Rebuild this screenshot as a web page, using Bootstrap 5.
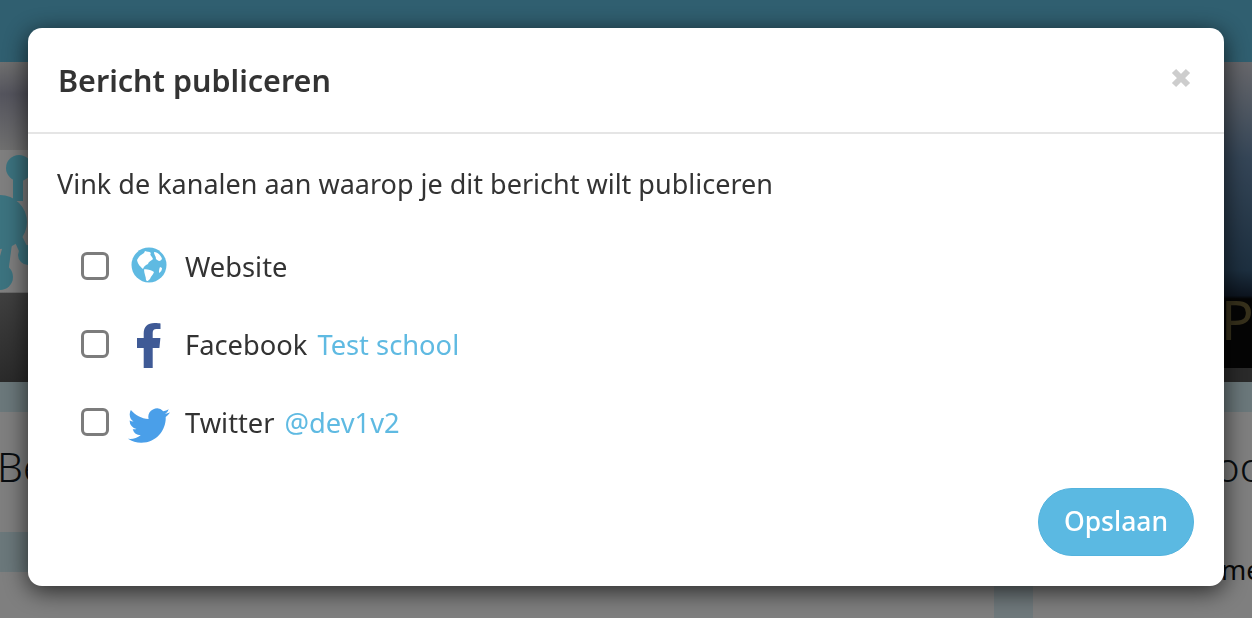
<!DOCTYPE html>
<html lang="nl">
<head>
<meta charset="utf-8">
<title>Bericht publiceren</title>
<link href="https://cdn.jsdelivr.net/npm/bootstrap@5.3.0/dist/css/bootstrap.min.css" rel="stylesheet">
<style>
html,body{height:100%;overflow:hidden}
body{font-family:"Noto Sans","Open Sans",sans-serif;background:#fff;color:#2f2f2f}
.topbar{height:62px;background:#60bee0}
.hero{height:320px}
.hero-left{width:28px;background:linear-gradient(#e0e0e0 0,#aaaabc 10%,#e0e0e0 27.5%,#fff 27.6%,#fff 72%,#808080 72.100%,#555 100%)}
.hero-right{width:28px;overflow:hidden;background:linear-gradient(#d0d0d8,#6a8caf 30%,#3a5f80 65%,#1a2a40 73%,#0a0a0a 74%,#0a0a0a 95.600%,#555 95.700%)}
.hero-logo{width:28px;height:140px;display:block;margin-top:90px}
.hero-letter{display:block;margin-top:222px;margin-left:-3px;font-size:54px;line-height:70px;font-weight:400;color:#6e6238;white-space:nowrap}
.band{height:30px;background:#d6f0f6}
.headline{height:120px;padding-top:28px;font-size:41px;font-weight:300;color:#121a22;line-height:52px;margin:0 -12px 0 -3px}
.lower{height:86px;position:relative}
.band-two{height:40px;background:#d6f0f6;width:80%}
.lower-row{height:46px}
.side-col{width:39px;margin-left:994px;background:#dff2f8;height:32px;margin-top:14px}
.side-word{position:absolute;left:1221px;top:20px;font-size:27px;line-height:36px;color:#111;white-space:nowrap}
.modal-plain{position:fixed;inset:0;z-index:1055}
.sheet{position:absolute;left:28px;top:28px;width:1196px;height:558px;background:#fff;border-radius:14px;box-shadow:0 5px 24px rgba(0,0,0,.7);display:flex;flex-direction:column;border:0}
.sheet-head{height:106px;border-bottom:2px solid #e5e5e5;padding:30px 30px 0;position:relative}
.sheet-title{font-size:30.500px;font-weight:600;line-height:44px;margin:0;color:#333}
.x-close{position:absolute;right:33px;top:38px;width:20px;height:20px;padding:0;margin-top:-2px;border:0;background:none;display:block}
.sheet-body{padding:30px 29px 0;flex:1}
.intro{font-size:27px;line-height:40px;margin:0 0 40px;color:#333;white-space:nowrap}
.channel{height:78px;padding-left:24px;font-size:27.300px;color:#333;align-items:flex-start}
.channel .form-check-input{width:28px;height:28px;margin:0;border:3px solid #7c7c7c;border-radius:6px;flex:none;margin-top:8px}
.ico{width:46px;margin-left:17px;margin-right:13px;flex:none;display:flex;justify-content:center}
.ico-globe{margin-top:3px}
.ico-f{margin-top:1px}
.ico-bird{margin-top:8px}
.ch-name{line-height:44px;margin-top:1px}
.ch-acc{color:#5fbae2;margin-left:10px;line-height:44px;margin-top:1px}
.sheet-foot{padding:0 30px 30px;display:flex;justify-content:flex-end}
.save-btn{width:156px;height:68px;border-radius:34px;background:#5bb9e2;border:1px solid #53b3de;color:#fff;font-size:26.500px;font-weight:500;padding:0}
</style>
</head>
<body>
<div class="topbar"></div>
<div class="d-flex justify-content-between hero">
  <div class="hero-left">
    <svg class="hero-logo" viewBox="0 0 28 140" aria-hidden="true"><g fill="#78e6ff"><circle cx="19" cy="16" r="13"/><rect x="13" y="25" width="10" height="24"/><circle cx="0" cy="70" r="27"/><path d="M4 90 12 92 8 122 -4 118z"/><circle cx="0" cy="125" r="13"/><path d="M14 88 22 84 30 100 22 106z"/><circle cx="28" cy="103" r="10"/></g></svg>
  </div>
  <div class="hero-right"><span class="hero-letter">P</span></div>
</div>
<div class="band"></div>
<div class="headline d-flex justify-content-between"><span>Be</span><span>oo</span></div>
<div class="lower">
  <div class="band-two"></div>
  <div class="lower-row"><div class="side-col"></div></div>
  <span class="side-word">me</span>
</div>
<div class="modal-backdrop show"></div>
<div class="modal-plain" role="dialog">
  <div class="sheet">
    <div class="sheet-head">
      <h4 class="sheet-title">Bericht publiceren</h4>
      <button class="x-close" aria-label="Sluiten"><svg viewBox="0 0 20 20" width="20" height="20"><path d="M3 3 17 17M17 3 3 17" stroke="#cdcdcd" stroke-width="6"/></svg></button>
    </div>
    <div class="sheet-body">
      <p class="intro">Vink de kanalen aan waarop je dit bericht wilt publiceren</p>
      <div class="d-flex channel">
        <input class="form-check-input" type="checkbox" aria-label="Website">
        <span class="ico ico-globe"><svg width="36" height="36" viewBox="0 0 36 36"><circle cx="18" cy="18" r="17.500" fill="#5fbae2"/><path fill="#fff" d="M6 13C8 9 10 8 13 6L14 4C16 5 18 4 20 6 18 8 21 9 22 12 20 14 18 14 17 17 15 18 13 19 12 22 10 20 7 18 6 13zM13 22.500C16 22 20 23 23 25 22 28 20 29 19 32 17 34 16 35 15 33 15 30 13 26 13 22.500zM23 5C26 5 30 8 31 12 29 15 27 14 25 12 25 9 23 8 23 5zM29 20 31 21C31 23 30 25 28 26 28 24 28 22 29 20z"/></svg></span>
        <span class="ch-name">Website</span>
      </div>
      <div class="d-flex channel">
        <input class="form-check-input" type="checkbox" aria-label="Facebook">
        <span class="ico ico-f"><svg width="24" height="45" viewBox="0 0 24 45"><path fill="#3f5a96" d="M15.700 45V25h6.700l1-10h-7.700V10c0-2.800 1-4 3.800-4H23.500V.5C22.500.3 20.300 0 17.500 0 10.500 0 6.700 4 6.700 10.500V15H0v10h6.700v20z"/></svg></span>
        <span class="ch-name">Facebook</span><span class="ch-acc">Test school</span>
      </div>
      <div class="d-flex channel">
        <input class="form-check-input" type="checkbox" aria-label="Twitter">
        <span class="ico ico-bird"><svg width="42" height="36" viewBox="0 0 24 20.500"><path fill="#4a9fe9" d="M23.953 2.570a10 10 0 01-2.825.775 4.958 4.958 0 002.163-2.723c-.951.555-2.005.959-3.127 1.184a4.920 4.920 0 00-8.384 4.482C7.690 6.095 4.067 4.130 1.640 1.162a4.822 4.822 0 00-.666 2.475c0 1.710.870 3.213 2.188 4.096a4.904 4.904 0 01-2.228-.616v.060a4.923 4.923 0 003.946 4.827 4.996 4.996 0 01-2.212.085 4.936 4.936 0 004.604 3.417 9.867 9.867 0 01-6.102 2.105c-.390 0-.779-.023-1.170-.067a13.995 13.995 0 007.557 2.209c9.053 0 13.998-7.496 13.998-13.985 0-.210 0-.420-.015-.630A9.935 9.935 0 0024 2.590z"/></svg></span>
        <span class="ch-name">Twitter</span><span class="ch-acc">@dev1v2</span>
      </div>
    </div>
    <div class="sheet-foot"><button class="save-btn" type="button">Opslaan</button></div>
  </div>
</div>
<script src="https://cdn.jsdelivr.net/npm/bootstrap@5.3.0/dist/js/bootstrap.bundle.min.js"></script>
</body>
</html>
